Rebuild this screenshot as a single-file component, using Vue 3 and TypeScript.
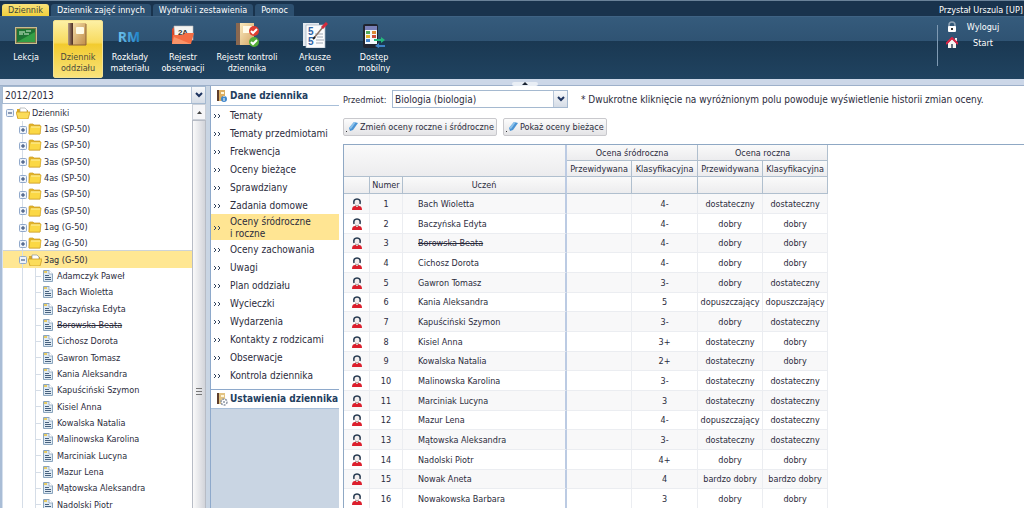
<script setup lang="ts">
import { ref } from 'vue'

interface RibbonItem { id: string; lines: string[]; active?: boolean }
interface Student { name: string; gone?: boolean; mid: string; plan: string; final: string }

const tabs = ['Dziennik', 'Dziennik zajęć innych', 'Wydruki i zestawienia', 'Pomoc']
const ribbon: RibbonItem[] = [
  { id: 'board', lines: ['Lekcja'] },
  { id: 'book', lines: ['Dziennik', 'oddziału'], active: true },
  { id: 'rm', lines: ['Rozkłady', 'materiału'] },
  { id: 'folder', lines: ['Rejestr', 'obserwacji'] },
  { id: 'check', lines: ['Rejestr kontroli', 'dziennika'] },
  { id: 'sheet', lines: ['Arkusze', 'ocen'] },
  { id: 'phone', lines: ['Dostęp', 'mobilny'] },
]
const units = ['1as (SP-50)', '2as (SP-50)', '3as (SP-50)', '4as (SP-50)', '5as (SP-50)', '6as (SP-50)', '1ag (G-50)', '2ag (G-50)', '3ag (G-50)']
const openUnit = '3ag (G-50)'
const students: Student[] = [
  { name: 'Bach Wioletta', mid: '4-', plan: 'dostateczny', final: 'dostateczny' },
  { name: 'Baczyńska Edyta', mid: '4-', plan: 'dobry', final: 'dobry' },
  { name: 'Borowska Beata', gone: true, mid: '4-', plan: 'dobry', final: 'dobry' },
  { name: 'Cichosz Dorota', mid: '4-', plan: 'dobry', final: 'dobry' },
  { name: 'Gawron Tomasz', mid: '3-', plan: 'dobry', final: 'dostateczny' },
  { name: 'Kania Aleksandra', mid: '5', plan: 'dopuszczający', final: 'dopuszczający' },
  { name: 'Kapuściński Szymon', mid: '3-', plan: 'dobry', final: 'dostateczny' },
  { name: 'Kisiel Anna', mid: '3+', plan: 'dostateczny', final: 'dobry' },
  { name: 'Kowalska Natalia', mid: '2+', plan: 'dostateczny', final: 'dobry' },
  { name: 'Malinowska Karolina', mid: '3-', plan: 'dostateczny', final: 'dostateczny' },
  { name: 'Marciniak Lucyna', mid: '3', plan: 'dostateczny', final: 'dostateczny' },
  { name: 'Mazur Lena', mid: '4-', plan: 'dopuszczający', final: 'dostateczny' },
  { name: 'Mątowska Aleksandra', mid: '3-', plan: 'dostateczny', final: 'dostateczny' },
  { name: 'Nadolski Piotr', mid: '4+', plan: 'dobry', final: 'dobry' },
  { name: 'Nowak Aneta', mid: '4', plan: 'bardzo dobry', final: 'bardzo dobry' },
  { name: 'Nowakowska Barbara', mid: '3', plan: 'dobry', final: 'dobry' },
]
const treeStudents = [{ name: 'Adamczyk Paweł', gone: false }, ...students.slice(0, 14)]
const menu: string[][] = [
  ['Tematy'], ['Tematy przedmiotami'], ['Frekwencja'], ['Oceny bieżące'], ['Sprawdziany'], ['Zadania domowe'],
  ['Oceny śródroczne', 'i roczne'], ['Oceny zachowania'], ['Uwagi'], ['Plan oddziału'], ['Wycieczki'],
  ['Wydarzenia'], ['Kontakty z rodzicami'], ['Obserwacje'], ['Kontrola dziennika'],
]
const year = ref('2012/2013')
const subject = ref('Biologia (biologia)')
</script>

<template>
  <div class="page">
    <header>
      <nav class="tabs">
        <button v-for="(t, i) in tabs" :key="t" class="tab" :class="{ current: i === 0 }">{{ t }}</button>
        <span class="user">Przystał Urszula [UP]</span>
      </nav>
      <div class="ribbon">
        <button v-for="r in ribbon" :key="r.id" class="tool" :class="[r.id, { active: r.active }]">
          <svg v-if="r.id === 'board'" width="26" height="26" viewBox="0 0 26 26">
            <rect x="2" y="5" width="22" height="17" fill="#c9bf8e" /><rect x="3" y="6" width="20" height="15" fill="#7c7648" />
            <rect x="4" y="7" width="18" height="13" fill="#1d7434" /><path d="M4 20L22 10V20Z" fill="#34a046" />
            <path d="M6 10h6M13 9h5M6 12h4M11 12h5" stroke="#d7f0d5" stroke-width="1" />
          </svg>
          <svg v-else-if="r.id === 'book'" width="26" height="26" viewBox="0 0 26 26">
            <defs><linearGradient id="cover" x1="0" x2="1" y2="1"><stop offset="0" stop-color="#f3dca6" /><stop offset="1" stop-color="#c08c48" /></linearGradient>
            <linearGradient id="spine" x1="0" x2="1"><stop offset="0" stop-color="#b39a84" /><stop offset="1" stop-color="#4b2c20" /></linearGradient></defs>
            <path d="M3 1H8V23H3Z" fill="url(#spine)" /><path d="M8 1H21V23H8Z" fill="url(#cover)" />
            <rect x="11" y="5" width="8" height="7" rx="1" fill="#fffbe7" /><path d="M21 2V23H4" fill="none" stroke="#8d6238" />
          </svg>
          <svg v-else-if="r.id === 'rm'" width="26" height="26" viewBox="0 0 26 26">
            <defs><linearGradient id="rmfill" x1="0" x2="1"><stop offset="0" stop-color="#72c5ed" /><stop offset="1" stop-color="#1b80c9" /></linearGradient></defs>
            <text x="12" y="20" text-anchor="middle" class="rmtext" fill="url(#rmfill)">RM</text>
          </svg>
          <svg v-else-if="r.id === 'folder'" width="26" height="26" viewBox="0 0 26 26">
            <path d="M2 7L4 5H14V21H2Z" fill="#d64527" /><path d="M4 4H23V18H5Z" fill="#f5f5f2" stroke="#bbb" stroke-width=".6" />
            <text x="13" y="13" text-anchor="middle" class="foldertext">2A</text>
            <path d="M2 22L3 13H13L15 11H24L21 22Z" fill="#f46d43" /><path d="M2 22L4 15L21 22Z" fill="#f99469" />
          </svg>
          <svg v-else-if="r.id === 'check'" width="26" height="26" viewBox="0 0 26 26">
            <defs><linearGradient id="cover2" x1="0" x2="1" y2="1"><stop offset="0" stop-color="#f9e9bd" /><stop offset="1" stop-color="#d5a566" /></linearGradient></defs>
            <path d="M2 1H6V23H2Z" fill="#8a6850" /><path d="M6 1H20V23H6Z" fill="url(#cover2)" /><rect x="9" y="4" width="9" height="7" fill="#fffbe7" />
            <circle cx="20" cy="9" r="5" fill="#e03d31" /><path d="M17 9L19 11L23 7" fill="none" stroke="#fff" stroke-width="2" />
            <circle cx="20" cy="20" r="5" fill="#55ad38" /><path d="M17 20L19 22L23 18" fill="none" stroke="#fff" stroke-width="2" />
          </svg>
          <svg v-else-if="r.id === 'sheet'" width="26" height="26" viewBox="0 0 26 26">
            <path d="M1 1H17V24H1Z" fill="#e3e9ef" /><path d="M4 3H23V26H4Z" fill="#fbfcfd" stroke="#a4b3c0" stroke-width=".7" />
            <text x="6" y="13" class="five">5</text><text x="6" y="23" class="five">5</text>
            <path d="M13 12h8M14 18h8M14 21h7M15 15h6" stroke="#a0a8b4" stroke-width="1" />
            <path d="M12 16L21 5" stroke="#8a7468" stroke-width="1.5" /><path d="M20 6L25 1" stroke="#d52b3b" stroke-width="3" /><path d="M11 17L13 15" stroke="#222" stroke-width="2" />
          </svg>
          <svg v-else width="26" height="26" viewBox="0 0 26 26">
            <rect x="2" y="2" width="15" height="24" rx="2" fill="#202430" /><rect x="4" y="5" width="12" height="17" fill="#f4f7fb" /><rect x="4" y="4" width="12" height="4" fill="#7980b8" />
            <path d="M5 9h4v3H5z" fill="#50aa5b" /><path d="M11 9h4v3h-4z" fill="#df8b37" /><path d="M5 13h4v3H5z" fill="#e0b22f" /><path d="M11 13h4v3h-4z" fill="#cd4d3c" /><path d="M5 17h4v3H5z" fill="#4686cd" />
            <path d="M13 17H20V15L24 18L20 21V19H13Z" fill="#25b77c" /><path d="M24 23H18V21L14 24L18 26V25H24Z" fill="#3e82c7" />
          </svg>
          <span class="cap"><span v-for="l in r.lines" :key="l">{{ l }}</span></span>
        </button>
        <div class="session">
          <a href="#wyloguj">
            <svg width="12" height="12" viewBox="0 0 12 12"><path d="M3 6V4a3 3 0 0 1 6 0v2" fill="none" stroke="#8fa3b5" stroke-width="1.5" /><rect x="2" y="5" width="8" height="6" rx="1" fill="#fff" /><path d="M6 7v2" stroke="#333" stroke-width="2" /></svg>
            <span>Wyloguj</span>
          </a>
          <a href="#start">
            <svg width="12" height="12" viewBox="0 0 12 12"><path d="M2 6L6 2L10 6V11H2Z" fill="#f6f4f1" /><path d="M9 1h2v3H9z" fill="#eee" /><path d="M0 7L6 1L12 7" fill="none" stroke="#da2445" stroke-width="2" /><path d="M5 7h2v4H5z" fill="#68717c" /></svg>
            <span>Start</span>
          </a>
        </div>
      </div>
      <div class="strip"><button class="fold" aria-label="Zwiń wstążkę"><svg width="6" height="3" viewBox="0 0 6 3"><path d="M3 0L6 3H0Z" fill="#1b2433" /></svg></button></div>
    </header>

    <main>
      <aside class="left">
        <div class="combo">
          <select v-model="year" aria-label="Rok szkolny"><option>2012/2013</option></select>
          <span class="arrow"><svg width="8" height="6" viewBox="0 0 8 6"><path d="M1 1L4 4L7 1" fill="none" stroke="#1d335f" stroke-width="2" /></svg></span>
        </div>
        <div class="treebox">
          <ul class="tree">
            <li class="root">
              <button class="toggle" aria-label="Zwiń"><svg width="9" height="9" viewBox="0 0 9 9"><rect x="1.500" y="1.500" width="7" height="7" rx="1" fill="#eef3fa" stroke="#91a9cb" /><path d="M3 5h4" stroke="#27406e" /></svg></button>
              <svg width="14" height="12" viewBox="0 0 14 12"><path d="M1 11V2H5L6 3H12V11Z" fill="#dda921" /><path d="M4 1H9L11 3V8H4Z" fill="#fff" stroke="#a3a9ad" stroke-width=".7" /><path d="M0 5H14L12 12H2Z" fill="#fbdc59" stroke="#cf9d23" stroke-width=".8" /></svg>
              <span>Dzienniki</span>
            </li>
            <li v-for="u in units" :key="u" class="unit" :class="{ open: u === openUnit }">
              <button class="toggle" :aria-label="u === openUnit ? 'Zwiń' : 'Rozwiń'"><svg width="9" height="9" viewBox="0 0 9 9"><rect x="1.500" y="1.500" width="7" height="7" rx="1" fill="#eef3fa" stroke="#91a9cb" /><path d="M3 5h4" stroke="#27406e" /><path v-if="u !== openUnit" d="M5 3v4" stroke="#27406e" /></svg></button>
              <svg v-if="u === openUnit" width="14" height="12" viewBox="0 0 14 12"><path d="M1 11V2H5L6 3H12V11Z" fill="#dda921" /><path d="M4 1H9L11 3V8H4Z" fill="#fff" stroke="#8b9298" stroke-width=".7" /><path d="M0 5H14L12 12H2Z" fill="#fbdc59" stroke="#cf9d23" stroke-width=".8" /></svg>
              <svg v-else width="14" height="12" viewBox="0 0 14 12"><path d="M1 2Q1 1 2 1H5L6 2H12V11H1Z" fill="#e8b92c" stroke="#c8991d" stroke-width=".7" /><path d="M2 3H13L12 11H1Z" fill="#fbd845" stroke="#d2a327" stroke-width=".7" /><path d="M3 4H12" stroke="#fff2a4" /></svg>
              <span>{{ u }}</span>
            </li>
            <li v-for="s in treeStudents" :key="s.name" class="leaf">
              <svg width="10" height="12" viewBox="0 0 10 12"><path d="M.5.5H6L9.500 4V11.500H.5Z" fill="#dfeaf3" stroke="#8aa5be" /><path d="M6 0V4H10" fill="#fff" stroke="#8aa5be" stroke-width=".8" /><path d="M2 5.500h4M2 7.500h6M2 9.500h6" stroke="#47617e" /><path d="M1 1h3v2H1z" fill="#e5ca65" /></svg>
              <span :class="{ gone: s.gone }">{{ s.name }}</span>
            </li>
          </ul>
          <div class="scroll">
            <button class="up" aria-label="Przewiń w górę"><svg width="5" height="3" viewBox="0 0 5 3"><path d="M2.500 0L5 3H0Z" fill="#444" /></svg></button>
            <div class="thumb"><i></i></div>
          </div>
        </div>
      </aside>

      <nav class="side">
        <h2>
          <svg width="12" height="14" viewBox="0 0 12 14"><path d="M1 1H3V12H1Z" fill="#5e3e2c" /><path d="M3 1H9V12H3Z" fill="#dcae62" /><path d="M5 3h3v2H5z" fill="#fff5d9" /><circle cx="8" cy="10" r="3" fill="#3f87cc" /><path d="M8 9v3M8 7v1" stroke="#fff" /></svg>
          Dane dziennika
        </h2>
        <a v-for="m in menu" :key="m[0]" href="#widok" :class="{ chosen: m.length > 1 }">
          <svg width="8" height="6" viewBox="0 0 8 6"><path d="M1 1L3 3L1 5M5 1L7 3L5 5" fill="none" stroke="#31435e" /></svg>
          <span><span v-for="l in m" :key="l" class="line">{{ l }}</span></span>
        </a>
        <h2 class="second">
          <svg width="12" height="14" viewBox="0 0 12 14"><path d="M1 1H3V12H1Z" fill="#5e3e2c" /><path d="M3 1H9V12H3Z" fill="#e3c382" /><path d="M5 3h3v2H5z" fill="#fff5d9" /><circle cx="8" cy="10" r="3" fill="#fff" stroke="#8d97a5" stroke-width="1.500" stroke-dasharray="2 1" /><circle cx="8" cy="10" r="1" fill="#8d97a5" /></svg>
          Ustawienia dziennika
        </h2>
      </nav>

      <section class="content">
        <div class="filter">
          <label for="subject">Przedmiot:</label>
          <div class="combo">
            <select id="subject" v-model="subject"><option>Biologia (biologia)</option></select>
            <span class="arrow"><svg width="8" height="6" viewBox="0 0 8 6"><path d="M1 1L4 4L7 1" fill="none" stroke="#1d335f" stroke-width="2" /></svg></span>
          </div>
          <p>* Dwukrotne kliknięcie na wyróżnionym polu powoduje wyświetlenie historii zmian oceny.</p>
        </div>
        <div class="actions">
          <button v-for="b in ['Zmień oceny roczne i śródroczne', 'Pokaż oceny bieżące']" :key="b">
            <svg width="12" height="12" viewBox="0 0 12 12"><path d="M3 7L8 1L12 2L7 9L4 10Z" fill="#4a93d4" /><path d="M3 7L8 1L10 1L5 8Z" fill="#8bc2ec" /><path d="M0 10h1v1H0z" fill="#333" /></svg>{{ b }}
          </button>
        </div>
        <div class="grid">
          <table>
            <colgroup><col class="c1"><col class="c2"><col class="c3"><col class="c4"><col class="c5"><col class="c4"><col class="c4"></colgroup>
            <thead>
              <tr><td colspan="3" rowspan="2" class="blank"></td><th colspan="2">Ocena śródroczna</th><th colspan="2">Ocena roczna</th></tr>
              <tr><th>Przewidywana</th><th>Klasyfikacyjna</th><th>Przewidywana</th><th>Klasyfikacyjna</th></tr>
              <tr class="low"><td></td><th>Numer</th><th class="edge">Uczeń</th><td></td><td></td><td></td><td></td></tr>
            </thead>
            <tbody>
              <tr v-for="(s, i) in students" :key="s.name">
                <td><svg width="10" height="12" viewBox="0 0 10 12"><path d="M0 12Q0 8 3 8H7Q10 8 10 12Z" fill="#dc1f2d" /><path d="M4 7H6V9H4Z" fill="#f4d9cf" /><path d="M2 5Q1 1 5 1Q9 1 8 5L7 7H3Z" fill="#f3eeee" /><path d="M2 6Q1 1 5 1Q9 1 8 6" fill="none" stroke="#24384f" stroke-width="1.500" /><path d="M3 7Q5 9 7 7" fill="none" stroke="#7d6a70" stroke-width=".7" /></svg></td>
                <td>{{ i + 1 }}</td>
                <td class="name edge"><span :class="{ gone: s.gone }">{{ s.name }}</span></td>
                <td></td><td>{{ s.mid }}</td><td>{{ s.plan }}</td><td>{{ s.final }}</td>
              </tr>
            </tbody>
          </table>
        </div>
      </section>
    </main>
  </div>
</template>

<style>
body { overflow: hidden; background: #fff; }
</style>

<style scoped>
* { box-sizing: border-box; }
.page { height: 100vh; display: flex; flex-direction: column; padding-bottom: 4px; overflow: hidden; color: #2b2b3c; font: 9px/12px "DejaVu Sans Condensed", "DejaVu Sans", sans-serif; white-space: nowrap; }
button { font: inherit; color: inherit; border: 0; padding: 0; margin: 0; background: none; cursor: pointer; }
svg { display: block; flex: none; }
a { color: inherit; text-decoration: none; }
.tabs { display: flex; gap: 2px; height: 16px; padding: 3px 1px 0 2px; background: #19334d; border-top: 1px solid #6a8299; }
.tab { padding: 0 6px; height: 12px; line-height: 12px; color: #fff; background: #2d5070; border-radius: 3px 3px 0 0; }
.tab.current { color: #3d4a3c; background: linear-gradient(#f8e17a, #f1d03c); }
.user { margin-left: auto; color: #fff; line-height: 12px; }
.ribbon { display: flex; gap: 2px; height: 63px; padding: 3px 0 2px 1px; background: linear-gradient(#355b7c 0, #2f5373 24px, #1a3852 24px, #204360 100%); border-top: 1px solid #3f6384; color: #fff; }
.tool { width: 50px; height: 58px; display: flex; flex-direction: column; align-items: center; padding-top: 2px; line-height: 11px; border-radius: 2px; }
.tool.folder { width: 52px; }
.tool.check { width: 72px; }
.tool.sheet { width: 60px; }
.tool.phone { width: 54px; }
.tool.active { color: #4b4a38; border: 1px solid #f3e293; padding-top: 1px; background: linear-gradient(#fdf0a4, #f8db5f 38%, #f2cb2f 42%, #f9e37b); }
.cap { display: flex; flex-direction: column; margin-top: 4px; }
.rmtext { font: bold 14px "Open Sans", sans-serif; }
.foldertext { font: bold 8px "Liberation Sans", sans-serif; fill: #333; }
.five { font: bold 10px "Liberation Sans", sans-serif; fill: #3166a8; }
.session { display: flex; flex-direction: column; gap: 4px; margin: 1px 3px 11px auto; padding-left: 9px; width: 84px; background: linear-gradient(#7f9ab3, #7f9ab3) 0 4px / 1px 100% no-repeat; }
.session a { display: flex; align-items: center; gap: 4px; height: 12px; }
.session span { width: 42px; text-align: center; }
.strip { height: 7px; background: #ccd7e8; border-bottom: 1px solid #9db0ca; position: relative; }
.fold { position: absolute; left: 50%; top: 3px; width: 26px; height: 4px; display: flex; justify-content: center; background: #e9eef5; border-radius: 2px; }
main { flex: 1; min-height: 0; display: flex; background: #c9d5e3; }
.left { width: 206px; display: flex; flex-direction: column; border-left: 2px solid #a9bdd6; background: #fff; }
.combo { display: flex; height: 18px; border: 1px solid #a5b9d0; background: #fff; }
.combo select { appearance: none; flex: 1; min-width: 0; border: 0; margin: 0; padding: 0 2px; background: #fff; color: #2b2b3c; font: 10px/15px "DejaVu Sans Condensed", "DejaVu Sans", sans-serif; }
.arrow { width: 14px; display: flex; align-items: center; justify-content: center; background: linear-gradient(#f8f9fb, #d5dce6); border-left: 1px solid #b8c6d8; }
.treebox { flex: 1; min-height: 0; display: flex; overflow: hidden; }
.tree { list-style: none; margin: 0; padding: 0; flex: 1; border-left: 1px solid #d6e0ed; }
.tree li { display: flex; align-items: center; height: 16px; gap: 2px; }
.tree li:nth-child(3n + 1) { height: 17px; }
.toggle { width: 9px; height: 9px; }
.root { padding-left: 2px; }
.unit { padding-left: 15px; }
.unit .toggle { margin-right: -1px; }
.unit, .leaf { background: linear-gradient(#d5dde7, #d5dde7) 19px 0 / 1px 100% no-repeat; }
.unit.open { background-color: #ffe793; box-shadow: 0 -1px #cdd3d8; }
.leaf { padding-left: 40px; background: linear-gradient(#d5dde7, #d5dde7) 19px 0 / 1px 100% no-repeat, linear-gradient(#d5dde7, #d5dde7) 32px 0 / 1px 100% no-repeat, linear-gradient(#d5dde7, #d5dde7) 32px 50% / 6px 1px no-repeat; }
.leaf > span { margin-left: 2px; }
.gone { text-decoration: line-through; }
.scroll { width: 14px; display: flex; flex-direction: column; background: #eee; }
.up { height: 16px; display: flex; align-items: center; justify-content: center; background: #f6f6f8; border: 1px solid #cbd0d8; }
.thumb { flex: 1; display: flex; align-items: center; justify-content: center; border: 1px solid #b7bcc5; border-bottom: 0; background: linear-gradient(90deg, #fafafa, #d2d4da); }
.thumb i { width: 6px; height: 7px; margin-top: 154px; background: repeating-linear-gradient(#777 0 1px, transparent 1px 3px); }
.side { width: 129px; margin-left: 4px; display: flex; flex-direction: column; font-size: 10px; line-height: 12px; border-left: 1px solid #8ea9cb; }
.side h2 { display: flex; align-items: center; gap: 2px; height: 20px; margin: 0; padding-left: 5px; font-size: 10px; font-weight: bold; color: #23405f; background: #fff; border-bottom: 1px solid #a8bfd9; }
.side a { display: flex; align-items: center; gap: 9px; height: 18px; padding: 1px 0 0 2px; background: #fff; }
.side a.chosen { height: 26px; background: #ffe593; }
.line { display: block; }
.side .second { border-top: 1px solid #8ea9cb; box-shadow: 0 -5px #fff; margin-top: 5px; }
.content { flex: 1; min-width: 0; display: flex; flex-direction: column; padding: 4px 0 0 4px; background: #fff; }
.filter { display: flex; height: 18px; }
.filter label { width: 49px; flex: none; line-height: 20px; }
.filter .combo { width: 176px; flex: none; }
.filter p { margin: 0 0 0 13px; font-size: 10px; line-height: 20px; }
.actions { display: flex; gap: 6px; margin: 10px 0 8px; }
.actions button { display: flex; align-items: center; gap: 2px; height: 18px; padding: 0 2px; border: 1px solid #c9c9cd; border-radius: 2px; background: linear-gradient(#fcfcfc, #e4e4e6); }
.grid { flex: 1; min-height: 0; overflow: hidden; border: 1px solid #8fa8c4; border-width: 1px 0 0 1px; }
table { table-layout: fixed; width: 484px; border-collapse: separate; border-spacing: 0; }
.c1 { width: 26px; } .c2 { width: 33px; } .c3 { width: 164px; } .c4 { width: 65px; } .c5 { width: 66px; }
th, td { padding: 0; text-align: center; font-weight: normal; overflow: hidden; }
thead tr { height: 16px; }
thead tr.low { height: 17px; }
thead th, thead td { border-right: 1px solid #b0bfce; border-bottom: 1px solid #b0bfce; background: linear-gradient(#fafafa, #ececee); }
thead .blank, thead .edge { border-right: 2px solid #bccbe3; }
tbody tr { height: 20px; }
tbody tr:nth-child(3n) { height: 19px; }
tbody td { border-right: 1px solid #ebedf1; border-bottom: 1px solid #ebedf1; }
tbody td.edge { border-right: 2px solid #bccbe3; }
tbody tr:nth-child(odd) { background: #f8f8f9; }
tbody svg { margin: auto; }
.name { text-align: left; padding-left: 15px; }
</style>
